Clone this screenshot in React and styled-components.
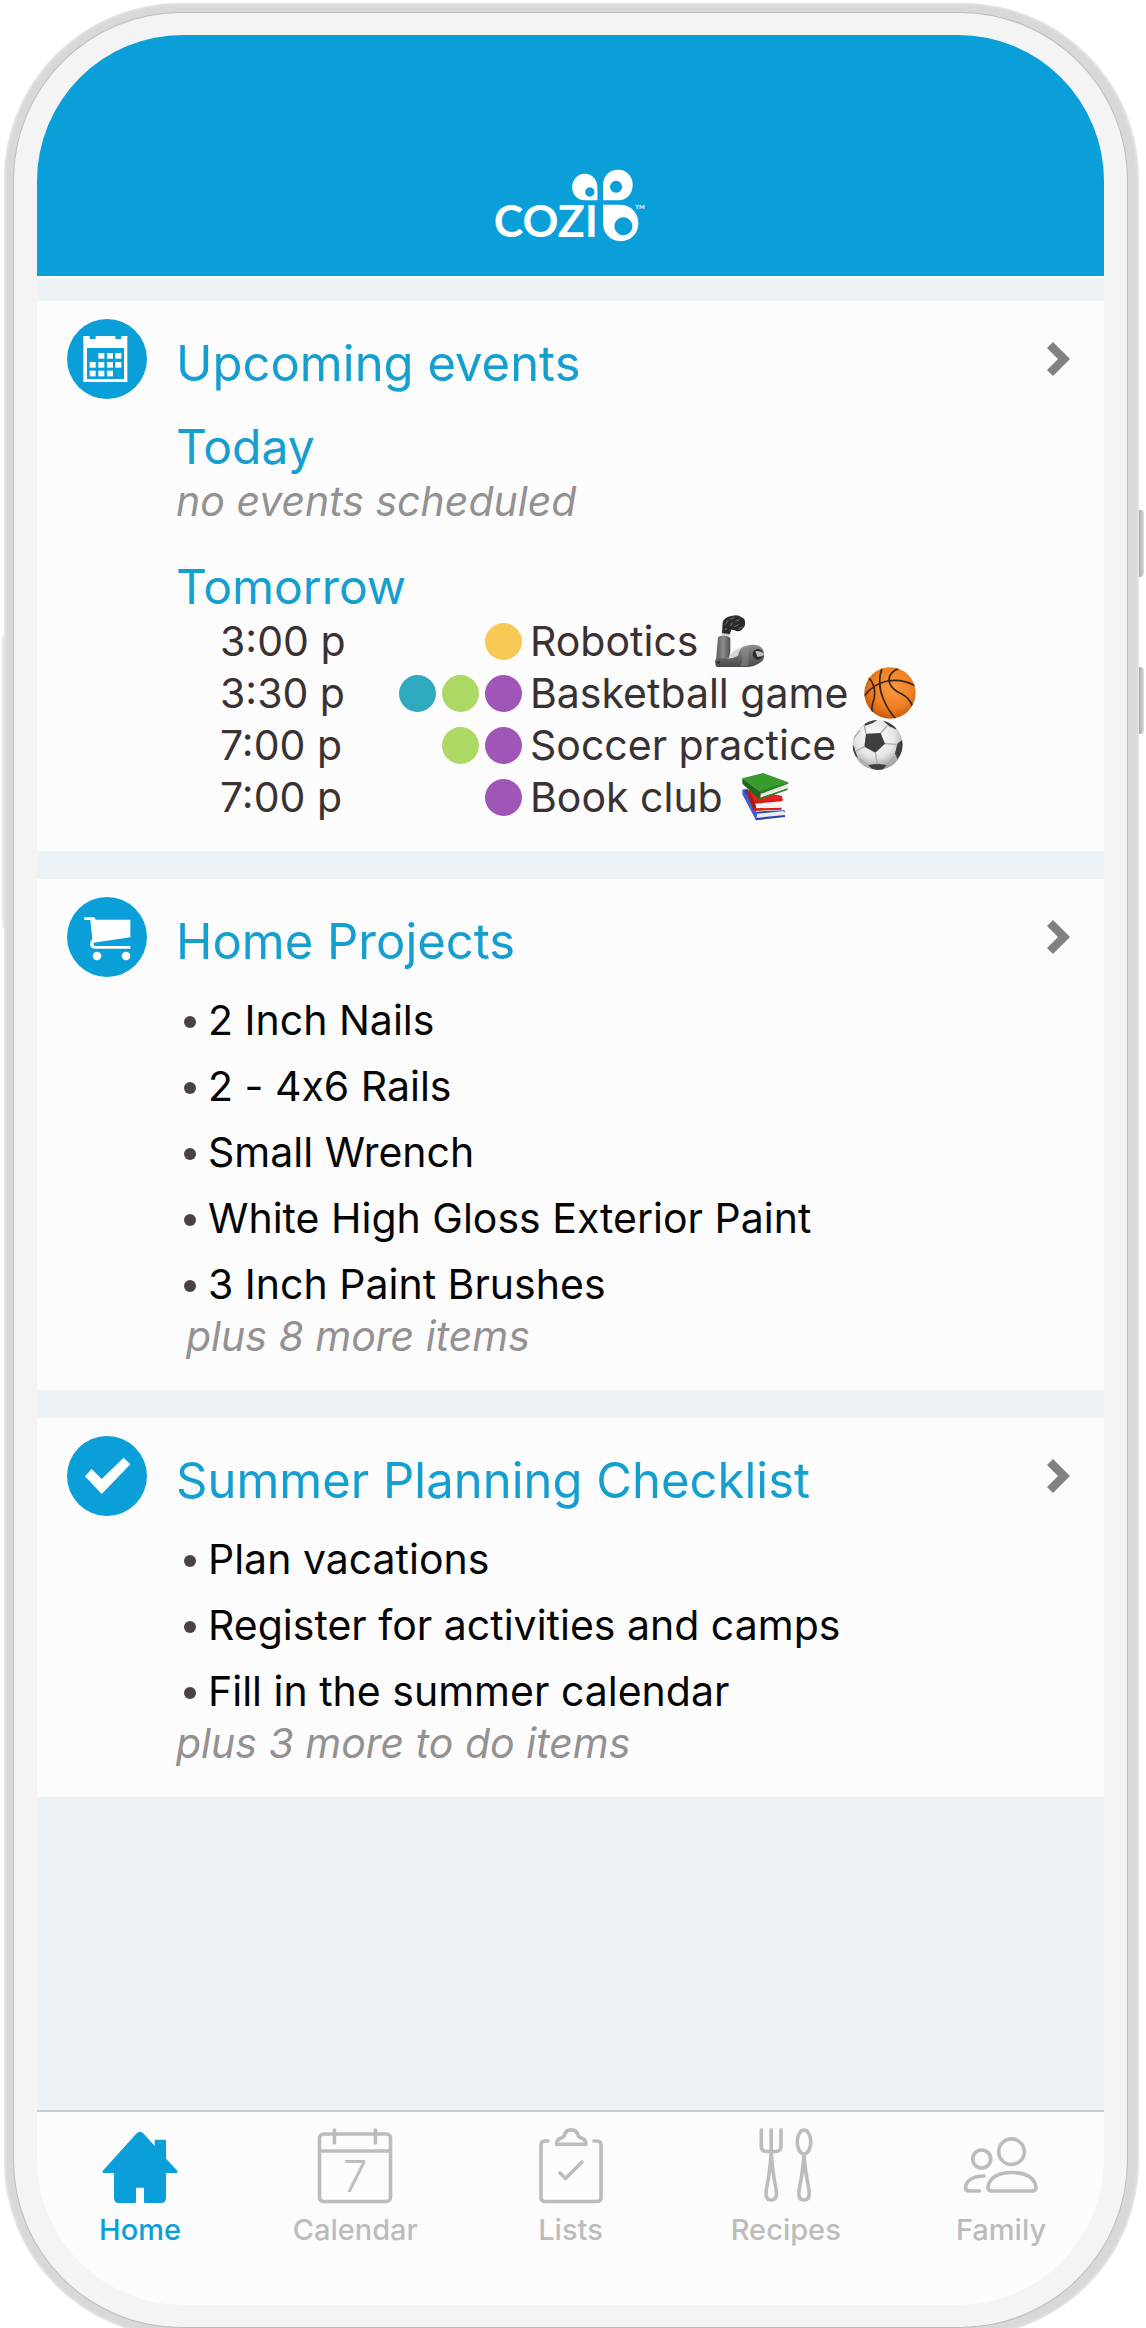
import React, { useState } from 'react'
import styled, { createGlobalStyle, ThemeProvider } from 'styled-components'

const theme = {
  brand: '#0b9fda',
  heading: '#159fd0',
  text: '#3a3132',
  item: '#060606',
  muted: '#939191',
  tab: '#bcbcbc',
  card: '#fcfcfd',
  page: '#edf2f7',
  bezel: '#f4f4f4',
}

const people = {
  yellow: '#f8c954',
  teal: '#2fa9bd',
  green: '#aed864',
  purple: '#a056b6',
}

const GlobalStyle = createGlobalStyle`
  *, *::before, *::after { box-sizing: border-box; }

  body {
    margin: 0;
    background: #fff;
    font-family: Inter, 'Liberation Sans', sans-serif;
  }

  h1, h2, h3, p, ul { margin: 0; padding: 0; font-weight: 400; }
`

/* phone shell */

const Page = styled.div`
  display: flex;
  flex-direction: column;
  min-height: 100vh;
  overflow: hidden;
`
const Device = styled.div`
  position: relative;
  flex: 1;
  display: flex;
  margin: 3px 7px -9px 4px;
  padding: 10px 12px 10px 10px;
  border-radius: 176px;
  background: #d8d8d8;
  box-shadow: inset 0 0 3px 1px #ececec;
`
const SideButton = styled.span`
  position: absolute;
  top: ${(p) => p.$top}px;
  ${(p) => p.$side}: ${(p) => (p.$side === 'right' ? -5 : -2)}px;
  width: ${(p) => (p.$side === 'right' ? 5 : 2)}px;
  height: ${(p) => p.$length}px;
  border-radius: ${(p) => (p.$side === 'right' ? '0 4px 4px 0' : '2px 0 0 2px')};
  background: ${(p) => (p.$side === 'right' ? 'linear-gradient(90deg, #a9a9a9, #dcdcdc)' : '#e9e9e9')};
`
const Bezel = styled.div`
  flex: 1;
  display: flex;
  padding: 22px 23px;
  border-radius: 167px;
  background: ${(p) => p.theme.bezel};
  box-shadow: 0 0 0 1px #bdbdbd;
`
const Screen = styled.div`
  flex: 1;
  min-width: 0;
  display: flex;
  flex-direction: column;
  overflow: hidden;
  border-radius: 146px;
  background: ${(p) => p.theme.page};
`

/* content */

const TopBar = styled.header`
  display: flex;
  align-items: flex-end;
  justify-content: center;
  height: 243px;
  padding-bottom: 33px;
  border-bottom: 2px solid #fafcfd;
  background: ${(p) => p.theme.brand};
  background-clip: padding-box;
`
const Cards = styled.main`
  flex: 1;
  display: flex;
  flex-direction: column;
  gap: 28px;
  padding-top: 23px;
`
const Card = styled.section`
  padding: 18px 33px 28px 30px;
  background: ${(p) => p.theme.card};
`
const CardHeader = styled.div`
  display: flex;
  align-items: flex-start;
  gap: 29px;
  margin-bottom: ${(p) => p.$space}px;
`
const CardTitle = styled.h2`
  flex: 1;
  padding-top: 17px;
  color: ${(p) => p.theme.heading};
  font-size: 49px;
  line-height: 56px;
`
const CardBody = styled.div`
  padding-left: 109px;
`
const OpenButton = styled.button`
  display: flex;
  margin-top: 23px;
  padding: 0;
  border: 0;
  background: none;
  cursor: pointer;
`
const DayTitle = styled.h3`
  color: ${(p) => p.theme.heading};
  font-size: 48px;
  line-height: 56px;
`
const Note = styled.p`
  padding-left: ${(p) => (p.$indent ? 10 : 0)}px;
  color: ${(p) => p.theme.muted};
  font-size: 41px;
  font-style: italic;
  line-height: 52px;
`
const Day = styled.div`
  & + & { margin-top: 32px; }
`
const EventRow = styled.li`
  display: grid;
  grid-template-columns: 179px 123px 1fr;
  align-items: center;
  height: 52px;
  padding-left: 44px;
  color: ${(p) => p.theme.text};
  font-size: 41px;
  line-height: 52px;
  list-style: none;
`
const Dots = styled.span`
  display: flex;
  justify-content: flex-end;
  gap: 6px;
`
const Dot = styled.span`
  width: 37px;
  height: 37px;
  border-radius: 50%;
  background: ${(p) => people[p.$who]};
`
const EventName = styled.span`
  display: flex;
  align-items: center;
  gap: 16px;
  padding-left: 8px;
  white-space: nowrap;
`
const ItemList = styled.ul`
  display: flex;
  flex-direction: column;
  gap: 14px;
`
const Item = styled.li`
  display: flex;
  align-items: center;
  gap: 12px;
  padding-left: 8px;
  color: ${(p) => p.theme.item};
  font-size: 41px;
  font-variant-ligatures: no-contextual;
  line-height: 52px;
  list-style: none;

  &::before {
    content: '';
    width: 12px;
    height: 12px;
    margin-top: 4px;
    border-radius: 50%;
    background: #4a4142;
  }
`
const TabBar = styled.nav`
  display: flex;
  justify-content: space-between;
  padding: 14px 28px 59px;
  border-top: 2px solid #c3cdd1;
  background: ${(p) => p.theme.card};
`
const Tab = styled.button`
  display: flex;
  flex-direction: column;
  align-items: center;
  gap: 8px;
  width: 150px;
  padding: 0;
  border: 0;
  background: none;
  color: ${(p) => (p.$active ? p.theme.brand : p.theme.tab)};
  font-family: inherit;
  font-size: 29px;
  font-weight: 500;
  line-height: 32px;
  cursor: pointer;
`
const TabSvg = styled.svg`
  width: 80px;
  height: 80px;
  fill: none;
  stroke: currentColor;
  stroke-width: 3.6;
  stroke-linecap: round;
  stroke-linejoin: round;
`
const BadgeSvg = styled.svg`
  flex: none;
  width: 80px;
  height: 80px;
  fill: #fff;
`
const EmojiSvg = styled.svg`
  flex: none;
  width: 52px;
  height: 52px;
`
const LogoSvg = styled.svg`
  width: 153px;
  height: 75px;
  fill: #fff;
  overflow: visible;
`
const Wordmark = styled.text`
  font-family: Lato, sans-serif;
  font-size: 134px;
  font-weight: 700;
  text-transform: uppercase;
`

/* drawings */

const Logo = () => (
  <LogoSvg viewBox="70 55 460 225" role="img" aria-label="cozi">
    <Wordmark x="69" y="261">cozi</Wordmark>
    <path fillRule="evenodd" d="M381 152H343C320 152 305 134 305 113C305 90 321 72 343 72C365 72 381 90 381 113ZM358 113a14 14 0 1 0 .1 0Z" />
    <path fillRule="evenodd" d="M398 152V105C398 79 417 60 443 60C468 60 487 79 487 105C487 132 469 152 443 152ZM437 93a18 18 0 1 0 .1 0Z" />
    <path fillRule="evenodd" d="M398 165H450C482 165 504 190 504 221C504 252 481 275 451 275C420 275 398 252 398 221ZM459 203a27 27 0 1 0 .1 0Z" />
    <text x="495" y="178" fontFamily="Lato, sans-serif" fontSize="18" fontWeight="700">TM</text>
  </LogoSvg>
)

const CalendarBadge = () => (
  <BadgeSvg viewBox="0 0 240 240" aria-hidden="true">
    <circle cx="120" cy="120" r="120" fill={theme.brand} />
    <path fillRule="evenodd" d="M49 51H68V60H86V51H145V60H163V51H181V189H49ZM60 87V180H171V87Z" />
    {[[94, 102], [120, 102], [145, 102], [68, 129], [94, 129], [120, 129], [145, 129], [68, 155], [94, 155], [120, 155]].map(
      ([x, y]) => <rect key={`${x}-${y}`} x={x} y={y} width="18" height="17" />
    )}
  </BadgeSvg>
)

const CartBadge = () => (
  <BadgeSvg viewBox="0 0 240 240" aria-hidden="true">
    <circle cx="120" cy="120" r="120" fill={theme.brand} />
    <path d="M52 61H79Q85 61 86 68H190V121L80 137Q78 147 86 147H190V155H84Q69 154 69 141Q69 132 76 127L70 69H52Z" />
    <circle cx="90" cy="177" r="13" />
    <circle cx="177" cy="177" r="13" />
  </BadgeSvg>
)

const CheckBadge = () => (
  <BadgeSvg viewBox="0 0 240 240" aria-hidden="true">
    <circle cx="120" cy="120" r="120" fill={theme.brand} />
    <path d="M54 121L74 99L104 129L170 65L190 85L104 174Z" />
  </BadgeSvg>
)

const Chevron = () => (
  <svg width="24" height="34" viewBox="0 0 24 34" fill="#818181" aria-hidden="true">
    <path d="M6 0L0 6L11 17L0 28L6 34L23 17Z" />
  </svg>
)

const ArmEmoji = () => (
  <EmojiSvg viewBox="0 0 156 156" role="img" aria-label="mechanical arm">
    <defs>
      <linearGradient id="upperArm" x1="0" x2="1">
        <stop offset="0" stopColor="#5a5a5a" />
        <stop offset=".5" stopColor="#8c8c8c" />
        <stop offset="1" stopColor="#505050" />
      </linearGradient>
      <linearGradient id="bicep" x1="0" x2="0" y1="0" y2="1">
        <stop offset="0" stopColor="#8e8e8e" />
        <stop offset="1" stopColor="#484848" />
      </linearGradient>
    </defs>
    <path d="M25 52L47 54L45 70L22 66Z" fill="#cfcfcf" />
    <path d="M12 66Q30 58 49 68L49 106L46 130L6 138Z" fill="url(#upperArm)" />
    <path d="M44 128Q52 108 78 98L92 90L86 128L50 140Z" fill="#d7d7d7" />
    <path d="M4 134Q8 126 26 130Q52 134 72 122Q76 96 100 92Q132 84 146 102Q154 118 148 134Q136 150 104 156H8Q2 152 4 134Z" fill="url(#bicep)" />
    <path d="M78 104Q88 90 112 91Q100 112 104 154H78Q92 134 78 104Z" fill="#909090" opacity=".5" />
    <circle cx="132" cy="118" r="16" fill="#2c2c2c" />
    <path d="M124 109Q140 106 150 116Q148 126 130 125Z" fill="#bdbdbd" />
    <circle cx="13" cy="142" r="5" fill="#333" />
    <path d="M24 54L26 22Q32 4 56 2Q70 -1 80 5L91 12Q95 22 92 34L82 46Q70 52 62 46L52 44L47 58Z" fill="#2b2b2b" />
    <path d="M34 28L42 16M50 12L60 8M66 18L76 14M62 34L72 30M74 42L84 36M50 32L54 24M32 44L38 41" stroke="#7d7d7d" strokeWidth="3" strokeLinecap="round" />
  </EmojiSvg>
)

const BasketballEmoji = () => (
  <EmojiSvg viewBox="0 0 156 156" role="img" aria-label="basketball">
    <defs>
      <radialGradient id="ball" cx=".55" cy=".4" r=".6">
        <stop offset="0" stopColor="#f99a3e" />
        <stop offset=".65" stopColor="#f07f22" />
        <stop offset="1" stopColor="#c75b10" />
      </radialGradient>
      <clipPath id="ballClip"><circle cx="78" cy="78" r="77" /></clipPath>
    </defs>
    <circle cx="78" cy="78" r="77" fill="url(#ball)" />
    <g fill="none" stroke="#35261c" strokeWidth="5" clipPath="url(#ballClip)">
      <path d="M0 88Q28 50 70 42Q116 34 156 58" />
      <path d="M14 32Q38 56 30 96Q22 118 24 136" />
      <path d="M54 2Q38 50 58 96Q74 134 96 156" />
      <path d="M104 4Q70 20 76 46Q82 68 112 80Q136 92 146 118" />
    </g>
  </EmojiSvg>
)

const SoccerEmoji = () => (
  <EmojiSvg viewBox="0 0 156 156" role="img" aria-label="soccer ball">
    <defs>
      <radialGradient id="soccer" cx=".45" cy=".35" r=".65">
        <stop offset="0" stopColor="#fff" />
        <stop offset=".6" stopColor="#e6e6e6" />
        <stop offset="1" stopColor="#9d9d9d" />
      </radialGradient>
      <clipPath id="soccerClip"><circle cx="77" cy="78" r="75" /></clipPath>
    </defs>
    <circle cx="77" cy="78" r="75" fill="url(#soccer)" />
    <g clipPath="url(#soccerClip)">
      <g fill="#3d3f42">
        <path d="M42 44L86 42L99 74L70 101L37 83Z" />
        <path d="M36 14Q56 -2 76 4L62 12L40 20Z" />
        <path d="M92 4Q122 6 134 32L112 22L98 10Z" />
        <path d="M0 76Q8 82 10 96L18 118Q0 104 0 76Z" />
        <path d="M152 62L136 74L129 104L136 120Q156 98 152 62Z" />
        <path d="M48 138L76 134L104 138L92 152Q66 158 48 138Z" />
      </g>
      <path d="M42 44L36 16M86 42L106 20M99 74L134 76M70 101L76 136M37 83L12 96M20 118L50 138M104 138L132 108M2 62L24 34" fill="none" stroke="#a9a9a9" strokeWidth="4" />
    </g>
  </EmojiSvg>
)

const BooksEmoji = () => (
  <EmojiSvg viewBox="0 0 156 156" role="img" aria-label="books">
    <path d="M10 56L26 54L50 122L136 118L138 124L56 134Z" fill="#2446a8" />
    <path d="M10 56L10 70L50 146L56 132L28 76Z" fill="#3c62cf" />
    <path d="M54 128L134 120L134 136L54 143Z" fill="#ecedf2" />
    <path d="M50 141L138 132V138L50 148Z" fill="#2446a8" />
    <path d="M28 56L128 74L132 88L50 98L28 76Z" fill="#e2231f" />
    <path d="M28 56L28 78L44 118L54 112L46 90Z" fill="#b01814" />
    <path d="M50 96L128 88L126 114L52 116Z" fill="#f6f2f2" />
    <path d="M46 88L130 84V91L50 98ZM44 112L128 110V116L44 120Z" fill="#d21f1b" />
    <path d="M10 22L72 6L148 34L66 64Z" fill="#399a30" />
    <path d="M10 22L10 38L60 84L66 64Z" fill="#1e6a1b" />
    <path d="M66 64L146 38L144 54L64 80Z" fill="#f3f4ee" />
    <path d="M66 71L144 46" stroke="#c9cbc4" strokeWidth="2" />
    <path d="M62 60L148 34V38L68 68ZM58 82L146 52V57L62 86Z" fill="#2b8125" />
  </EmojiSvg>
)

const HomeIcon = () => (
  <TabSvg viewBox="0 0 80 80" aria-hidden="true">
    <path
      fill="currentColor"
      stroke="none"
      d="M36.5 7.5Q40 4 43.5 7.5L54.7 20V14.7Q54.7 13.7 55.7 13.7H65Q66 13.7 66 14.7V32.5L77 44.5Q78.5 47 76 47H66V72Q66 77 61 77H45Q44 77 44 76V61.7H36V76Q36 77 35 77H19Q14 77 14 72V47H4Q1.5 47 3 44.5Z"
    />
  </TabSvg>
)

const CalendarIcon = () => (
  <TabSvg viewBox="0 0 80 80" aria-hidden="true">
    <rect x="4.5" y="8" width="71" height="67.5" rx="4" />
    <path d="M4.5 25H75.5M19.4 4V17M60.4 4V17" />
    <text x="40" y="66" fill="currentColor" stroke="none" fontSize="44" fontWeight="300" textAnchor="middle">7</text>
  </TabSvg>
)

const ListsIcon = () => (
  <TabSvg viewBox="0 0 80 80" aria-hidden="true">
    <path d="M17 15H14Q10 15 10 19V71.5Q10 75.5 14 75.5H66Q70 75.5 70 71.5V19Q70 15 66 15H63" />
    <path d="M25.5 18.3H55Q55 13.5 50.5 12Q47.5 11 47 9A7 7 0 0 0 33.5 9Q33 11 30 12Q25.5 13.5 25.5 18.3Z" />
    <path d="M29 47L34.5 52.5L51 36" />
  </TabSvg>
)

const RecipesIcon = () => (
  <TabSvg viewBox="0 0 80 80" aria-hidden="true">
    <path d="M15.3 4V20Q15.3 25.5 20.5 25.5H30Q35 25.5 35 20V4M25.2 4V25.5" />
    <path d="M25.2 26Q24 46 20.5 63Q18.5 74 25.2 74T30 63Q26.5 46 25.2 26Z" />
    <ellipse cx="58" cy="16" rx="6.8" ry="12" />
    <path d="M58 30Q56.8 46 53.3 63Q51.3 74 58 74T62.8 63Q59.3 46 58 30Z" />
  </TabSvg>
)

const FamilyIcon = () => (
  <TabSvg viewBox="0 0 80 80" aria-hidden="true">
    <circle cx="50.5" cy="25.7" r="12.8" />
    <circle cx="20.7" cy="33" r="9" />
    <path d="M31 65H71Q75 65 75 61C74 52 65 46.5 51 46.5C37 46.5 28 52 27 61Q27 65 31 65Z" />
    <path d="M23 50C13 50 5 54 4.5 61.5Q4.5 65 8.5 65H18.5" />
  </TabSvg>
)

const EVENTS = [
  { time: '3:00 p', who: ['yellow'], name: 'Robotics', Emoji: ArmEmoji },
  { time: '3:30 p', who: ['teal', 'green', 'purple'], name: 'Basketball game', Emoji: BasketballEmoji },
  { time: '7:00 p', who: ['green', 'purple'], name: 'Soccer practice', Emoji: SoccerEmoji },
  { time: '7:00 p', who: ['purple'], name: 'Book club', Emoji: BooksEmoji },
]

const PROJECTS = [
  '2 Inch Nails',
  '2 - 4x6 Rails',
  'Small Wrench',
  'White High Gloss Exterior Paint',
  '3 Inch Paint Brushes',
]

const CHECKLIST = ['Plan vacations', 'Register for activities and camps', 'Fill in the summer calendar']

const TABS = [
  { name: 'Home', Icon: HomeIcon },
  { name: 'Calendar', Icon: CalendarIcon },
  { name: 'Lists', Icon: ListsIcon },
  { name: 'Recipes', Icon: RecipesIcon },
  { name: 'Family', Icon: FamilyIcon },
]

const HomeCard = ({ title, badge, space = 17, children }) => (
  <Card>
    <CardHeader $space={space}>
      {badge}
      <CardTitle>{title}</CardTitle>
      <OpenButton type="button" aria-label={`Open ${title}`}>
        <Chevron />
      </OpenButton>
    </CardHeader>
    <CardBody>{children}</CardBody>
  </Card>
)

const Items = ({ items }) => (
  <ItemList>
    {items.map((x) => <Item key={x}>{x}</Item>)}
  </ItemList>
)

export default function App() {
  const [tab, setTab] = useState('Home')

  return (
    <ThemeProvider theme={theme}>
      <GlobalStyle />
      <Page>
        <Device>
          <SideButton $side="left" $top={632} $length={293} />
          <SideButton $side="right" $top={507} $length={67} />
          <SideButton $side="right" $top={664} $length={67} />

          <Bezel>
            <Screen>
              <TopBar>
                <Logo />
              </TopBar>

              <Cards>
                <HomeCard title="Upcoming events" badge={<CalendarBadge />} space={20}>
                  <Day>
                    <DayTitle>Today</DayTitle>
                    <Note>no events scheduled</Note>
                  </Day>
                  <Day>
                    <DayTitle>Tomorrow</DayTitle>
                    <ul>
                      {EVENTS.map(({ time, who, name, Emoji }) => (
                        <EventRow key={name}>
                          <time>{time}</time>
                          <Dots>
                            {who.map((x) => <Dot key={x} $who={x} />)}
                          </Dots>
                          <EventName>
                            {name}
                            <Emoji />
                          </EventName>
                        </EventRow>
                      ))}
                    </ul>
                  </Day>
                </HomeCard>

                <HomeCard title="Home Projects" badge={<CartBadge />}>
                  <Items items={PROJECTS} />
                  <Note $indent>plus 8 more items</Note>
                </HomeCard>

                <HomeCard title="Summer Planning Checklist" badge={<CheckBadge />}>
                  <Items items={CHECKLIST} />
                  <Note>plus 3 more to do items</Note>
                </HomeCard>
              </Cards>

              <TabBar>
                {TABS.map(({ name, Icon }) => (
                  <Tab
                    key={name}
                    type="button"
                    $active={name === tab}
                    aria-current={name === tab ? 'page' : undefined}
                    onClick={() => setTab(name)}>
                    <Icon />
                    {name}
                  </Tab>
                ))}
              </TabBar>
            </Screen>
          </Bezel>
        </Device>
      </Page>
    </ThemeProvider>
  )
}
